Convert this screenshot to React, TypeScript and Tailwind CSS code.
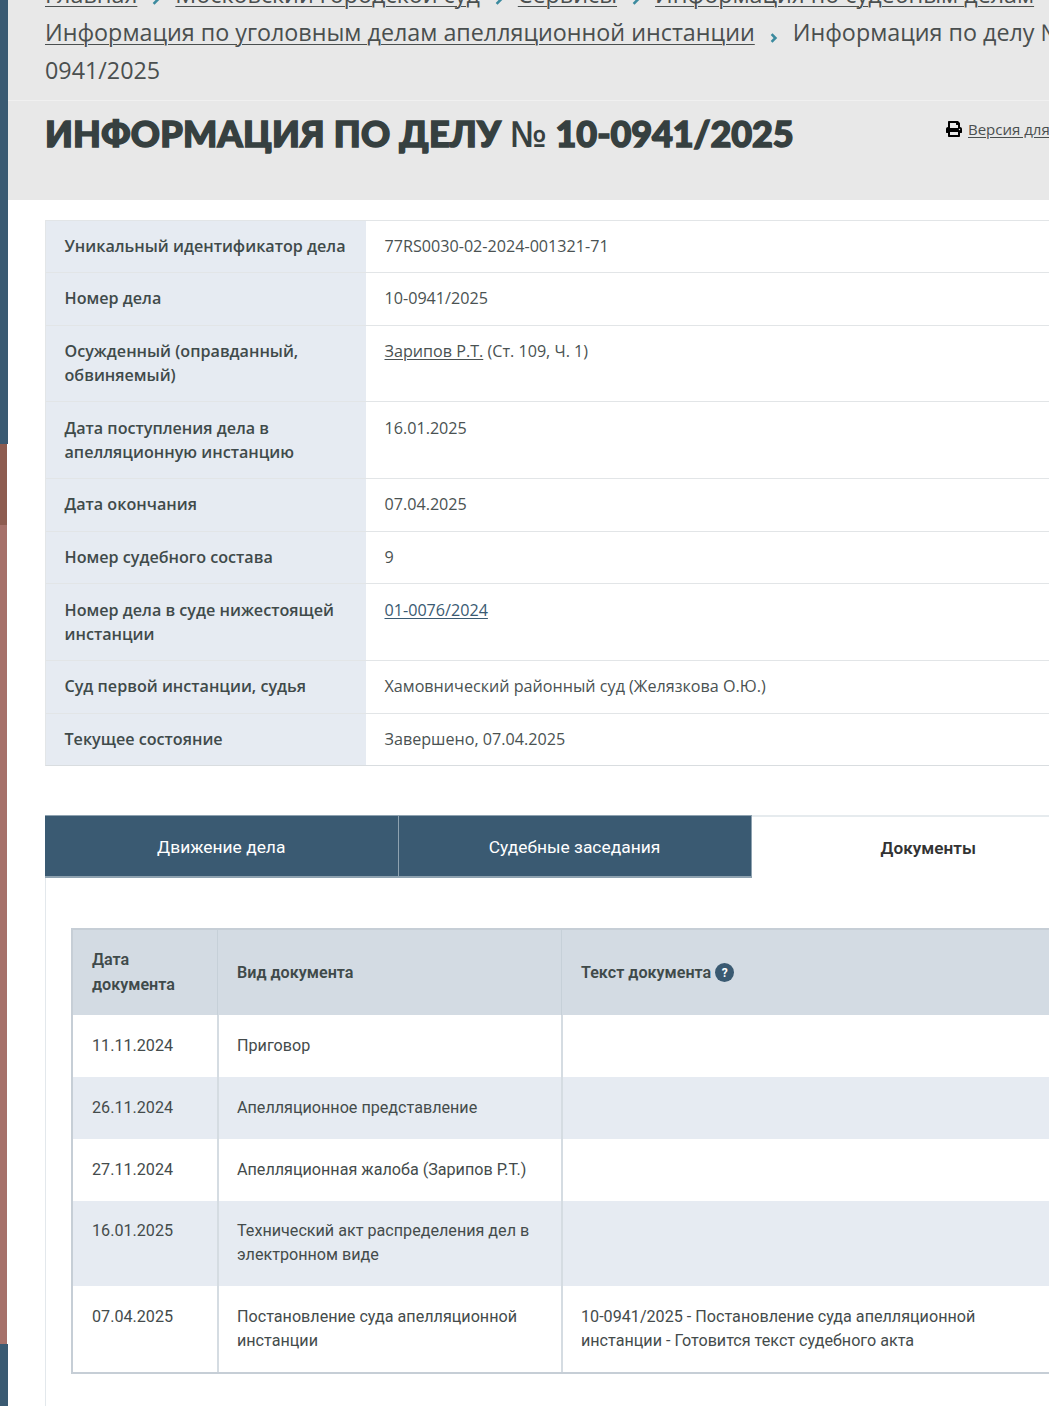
import { FaPrint } from "react-icons/fa";

const caseRows = [
  { label: "Уникальный идентификатор дела", value: "77RS0030-02-2024-001321-71", h: "h-[52px]", pt: "pt-[13px]" },
  { label: "Номер дела", value: "10-0941/2025", h: "h-[53px]", pt: "pt-[13px]" },
  { label: "Осужденный (оправданный, обвиняемый)", value: "person", h: "h-[76px]", pt: "pt-[13px]" },
  { label: "Дата поступления дела в апелляционную инстанцию", value: "16.01.2025", h: "h-[77px]", pt: "pt-[14px]" },
  { label: "Дата окончания", value: "07.04.2025", h: "h-[53px]", pt: "pt-[13px]" },
  { label: "Номер судебного состава", value: "9", h: "h-[52px]", pt: "pt-[13px]" },
  { label: "Номер дела в суде нижестоящей инстанции", value: "link", h: "h-[77px]", pt: "pt-[14px]" },
  { label: "Суд первой инстанции, судья", value: "Хамовнический районный суд (Желязкова О.Ю.)", h: "h-[53px]", pt: "pt-[13px]" },
  { label: "Текущее состояние", value: "Завершено, 07.04.2025", h: "h-[52px]", pt: "pt-[13px]" },
];

const docRows = [
  { date: "11.11.2024", kind: "Приговор", text: "", h: "h-[62px]", pt: "pt-[19px]" },
  { date: "26.11.2024", kind: "Апелляционное представление", text: "", h: "h-[62px]", pt: "pt-[19px]", alt: true },
  { date: "27.11.2024", kind: "Апелляционная жалоба (Зарипов Р.Т.)", text: "", h: "h-[62px]", pt: "pt-[19px]" },
  { date: "16.01.2025", kind: "Технический акт распределения дел в электронном виде", text: "", h: "h-[85px]", pt: "pt-[18px]", alt: true },
  {
    date: "07.04.2025",
    kind: "Постановление суда апелляционной инстанции",
    text: "10-0941/2025 - Постановление суда апелляционной инстанции - Готовится текст судебного акта",
    h: "h-[86px]",
    pt: "pt-[19px]",
  },
];

function Crumb({ children }: { children: string }) {
  return (
    <>
      <a className="underline decoration-1 underline-offset-[3px]">{children}</a>
      <svg viewBox="0 0 8 10" className="inline-block w-[8px] h-[10px] mx-[15px] align-[-2px]" fill="none" stroke="#3b8a9e" strokeWidth={2.6}>
        <path d="M1.6 1.2 5.4 5 1.6 8.8" />
      </svg>
    </>
  );
}

function CaseValue({ value }: { value: string }) {
  if (value === "person") {
    return (
      <>
        <a className="underline underline-offset-2">Зарипов Р.Т.</a> (Ст. 109, Ч. 1)
      </>
    );
  }
  if (value === "link") {
    return <a className="underline underline-offset-2 text-[#3a5a72]">01-0076/2024</a>;
  }
  return <>{value}</>;
}

export default function App() {
  return (
    <div className="flex h-[1406px] w-[1049px] overflow-hidden bg-white text-[#3f4a4a] font-['Open_Sans',sans-serif]">
      {/* Side strip */}
      <div className="flex flex-col w-[8px] shrink-0">
        <div className="h-[444px] w-[8px] bg-[#3a5a72]" />
        <div className="h-[81px] w-[7px] bg-[#8d5c50]" />
        <div className="h-[819px] w-[7px] bg-[#a6716a]" />
        <div className="flex-1 w-[8px] bg-[#3a5a72]" />
      </div>

      <div className="w-[1140px] shrink-0">
        {/* Grey page header */}
        <div className="bg-[#e8e8e8] h-[225px] -mt-[25px]">
          <div className="h-[126px] px-[37px] border-b border-[#f0f0f0] text-[23.3px] leading-[38px] text-[#4a4f4f]">
            <div className="w-[1095px]">
              <Crumb>Главная</Crumb>
              <Crumb>Московский городской суд</Crumb>
              <Crumb>Сервисы</Crumb>
              <Crumb>Информация по судебным делам</Crumb>
              <Crumb>Информация по уголовным делам апелляционной инстанции</Crumb>
              <span>
                Информация по делу № 10-
                <br />
                0941/2025
              </span>
            </div>
          </div>
          <div className="flex items-start pl-[37px] pt-[8px]">
            <h1 className="w-[901px] text-[#364040] text-[36px] leading-[48px] font-black tracking-[0.25px] font-['Lato',sans-serif] [-webkit-text-stroke:1.5px_#364040] whitespace-nowrap">
              ИНФОРМАЦИЯ ПО ДЕЛУ <span className="font-['Open_Sans',sans-serif] font-semibold [-webkit-text-stroke:0]">№</span>{" "}
              <span className="tracking-[-0.1px]">10-0941/2025</span>
            </h1>
            <div className="flex items-center gap-[6px] pt-[9px] text-[15px] text-[#4a4f4f] whitespace-nowrap">
              <FaPrint className="w-[16px] h-[16px] text-black" />
              <a className="underline underline-offset-2">Версия для печати</a>
            </div>
          </div>
        </div>

        <div className="pl-[37px] pt-[20px] w-[1097px]">
          {/* Case info */}
          <div className="border-x border-b border-[#e3e6e8] border-b-[#d9dde0] text-[16.15px] leading-[24px]">
            {caseRows.map((row) => (
              <div key={row.label} className={`grid grid-cols-[319.5px_1fr] ${row.h} border-t border-[#e2e5e7]`}>
                <div className={`bg-[#e6ebf2] px-[18.5px] ${row.pt} font-semibold text-[#3f4a4a]`}>{row.label}</div>
                <div className={`px-[19px] ${row.pt} text-[#4a5252]`}>
                  <CaseValue value={row.value} />
                </div>
              </div>
            ))}
          </div>

          {/* Tabs */}
          <div className="grid grid-cols-[353.5px_353px_353.5px] mt-[49px] h-[63px] font-['Roboto',sans-serif] text-[17.4px]">
            <div className="flex items-center justify-center pt-[3px] bg-[#3a5a72] text-white border-t border-b-2 border-[#8ea2b0] border-r">
              Движение дела
            </div>
            <div className="flex items-center justify-center pt-[3px] bg-[#3a5a72] text-white border-t border-b-2 border-r border-[#8ea2b0]">
              Судебные заседания
            </div>
            <div className="flex items-center justify-center bg-white border-t-2 border-[#e6ebee] font-semibold text-[17.2px] text-[#333] pt-[2px]">
              Документы
            </div>
          </div>

          {/* Documents panel */}
          <div className="border-l border-[#e3e8ec] pl-[25px] pt-[50px] h-[540px] font-['Roboto',sans-serif] text-[16.15px] leading-[24px] text-[#444b4b]">
            <div className="border-2 border-[#c6ced6] w-[1010px]">
              <div className="grid grid-cols-[144px_344px_1fr] h-[85px] bg-[#d3dbe3] font-semibold text-[#3f4a4a]">
                <div className="flex items-center pl-[19px] pr-[30px] pb-[2px] leading-[25px]">Дата документа</div>
                <div className="flex items-center pl-[19px] border-l border-[#c6d0d8]">Вид документа</div>
                <div className="flex items-center gap-[4px] pl-[19px] border-l border-[#c6d0d8]">
                  Текст документа
                  <span className="flex items-center justify-center w-[19px] h-[19px] rounded-full bg-[#3a5a72] text-white text-[12px] leading-none font-bold">
                    ?
                  </span>
                </div>
              </div>
              {docRows.map((row) => (
                <div key={row.date} className={`grid grid-cols-[144px_344px_1fr] ${row.h} ${row.alt ? "bg-[#e6ebf2]" : ""}`}>
                  <div className={`pl-[19px] ${row.pt}`}>{row.date}</div>
                  <div className={`pl-[18px] pr-[24px] border-l-2 border-[#d5dce2] ${row.pt}`}>{row.kind}</div>
                  <div className={`pl-[18px] pr-[80px] border-l-2 border-[#d5dce2] ${row.pt}`}>{row.text}</div>
                </div>
              ))}
            </div>
          </div>
        </div>
      </div>
    </div>
  );
}
